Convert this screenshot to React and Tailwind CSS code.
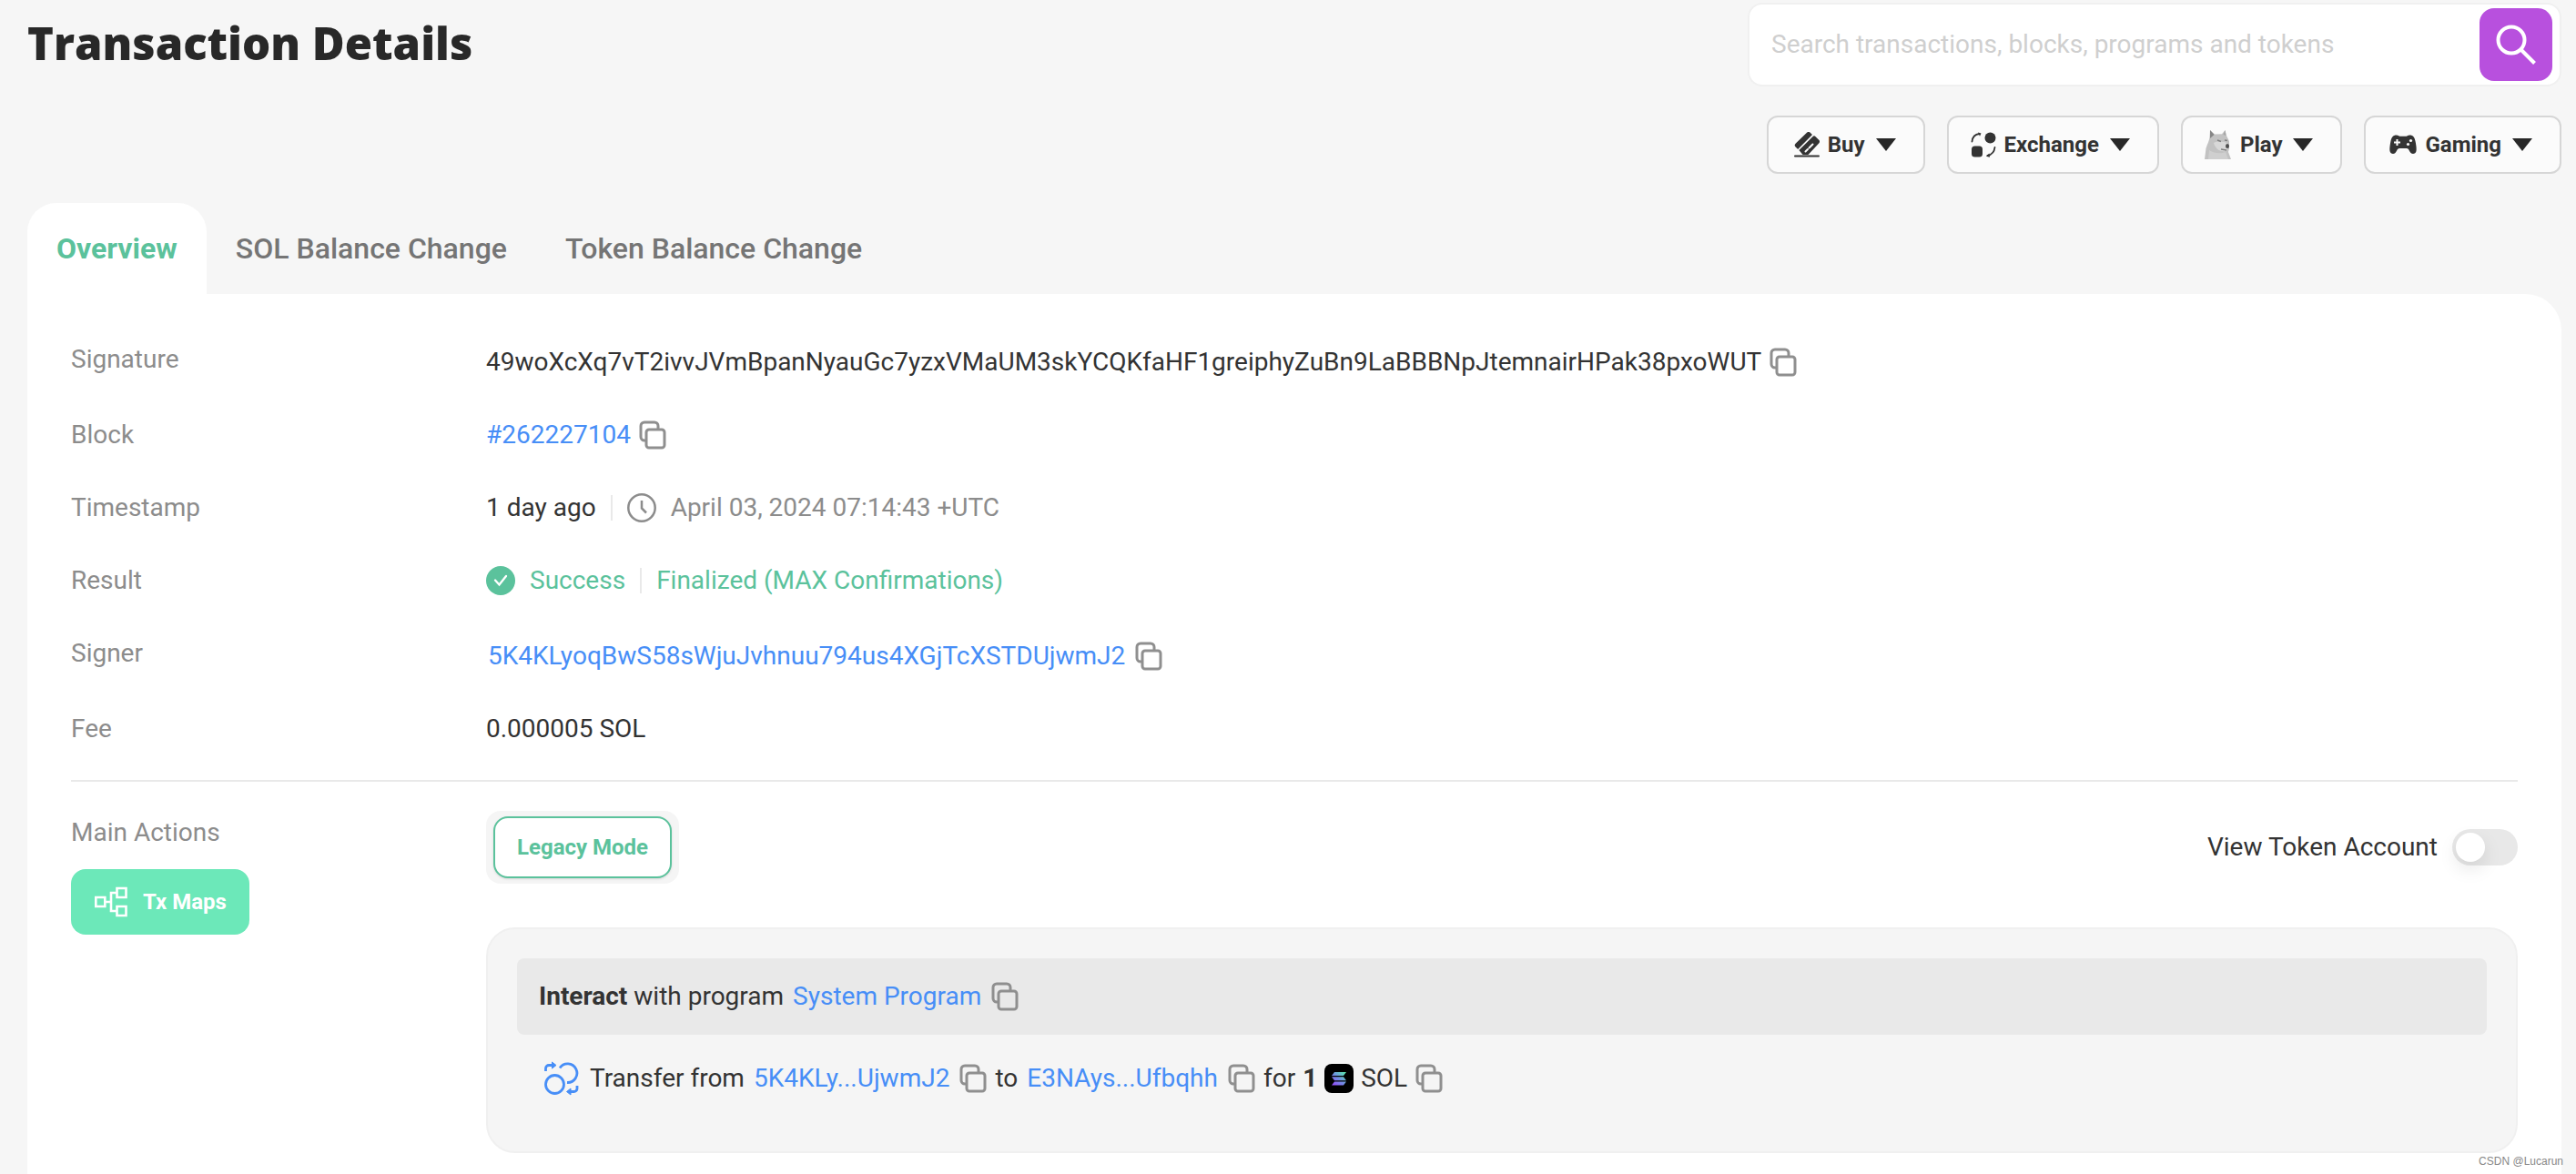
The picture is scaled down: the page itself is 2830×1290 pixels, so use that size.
import React from 'react';

const COPY_PATHS = [
  'M10 22H7a4 4 0 0 1-4-4V6a4 4 0 0 1 4-4h11a4 4 0 0 1 4 4v3',
  'M12 10h14a3 3 0 0 1 3 3v14a3 3 0 0 1-3 3H12a3 3 0 0 1-3-3V13a3 3 0 0 1 3-3z',
];

const CopyButton = () => (
  <button type="button" aria-label="Copy" className="shrink-0">
    <svg viewBox="0 0 32 32" className="h-8 w-8" fill="none" stroke="#8f8f8f" strokeWidth="3">
      {COPY_PATHS.map((d) => (
        <path key={d} d={d} />
      ))}
    </svg>
  </button>
);

const BuyIcon = () => (
  <svg viewBox="0 0 28 28" className="ml-1 h-7 w-7" fill="#333">
    <path d="M14 .8a2.600 2.600 0 0 1 3.700 0l2.300 2.300L4.200 18.900l-2.600-2.500a2.600 2.600 0 0 1 0-3.700z" />
    <path d="M5.400 20 20.600 5a2 2 0 0 1 2.800 0l3.800 3.800a2.600 2.600 0 0 1 0 3.700L15.500 25H9.600z" />
    <path d="M1 26.500h26" stroke="#333" strokeWidth="2" strokeLinecap="round" />
    <path d="m12.500 21.500 2.500-2.500m1.500-1.500 4-4" stroke="#fbfbfb" strokeWidth="2" strokeLinecap="round" />
  </svg>
);

const ExchangeIcon = () => (
  <svg viewBox="0 0 28 28" className="h-7 w-7" fill="#333">
    <circle cx="21.500" cy="6.500" r="6" />
    <rect x="1" y="15.500" width="12" height="12" rx="3.500" />
    <path d="M1.500 10.500C2 6 5 2.500 9.500 2M26.500 17c-.5 4.500-3.500 8-8 9" fill="none" stroke="#333" strokeWidth="1.800" strokeLinecap="round" />
    <path d="M8 .5 11.500 1.500 10 4.800zM20.500 23.500 17 26.800l4 1z" />
  </svg>
);

const PlayIcon = () => (
  <svg viewBox="0 0 30 32" className="h-8 w-[30px]">
    <path d="M0 32 1.500 20C3 15 5 12 5.500 8L6 0l5 4.500 8-.3L22.500 0 24 6l3 6v8l-1 4 3 8z" fill="#c2c2c2" />
    <path d="M6 0l4.500 5L6 9z" fill="#858585" />
    <path d="M22.500 0 23.500 6l-3-1z" fill="#a5a5a5" />
    <path d="M10 14c4-2 12-2 15 1l1 4-3 4c-6 1-11-2-13-9z" fill="#d8d8d8" />
    <path d="M5 22c6 4 13 4 18 2l3 8H4z" fill="#cfcfcf" />
    <path d="m14 11 4 1.500M22 11l3 .5M18 21l6 1" stroke="#808080" strokeWidth="1.500" />
    <ellipse cx="25" cy="17.500" rx="2" ry="2.500" fill="#4d4d4d" />
  </svg>
);

const GamingIcon = () => (
  <svg viewBox="0 0 30 22" className="ml-[2px] h-[22px] w-[30px]">
    <path
      d="M8 .5c1.500 0 2.300 1.200 3.500 1.200h7C19.700 1.700 20.500.5 22 .5c4.500 0 5.800 2.500 6.700 7.500.7 3.800 1.300 7.500.8 10-.5 3-4 4-6 2-1.600-1.800-2.300-5-4.500-5h-8c-2.200 0-2.900 3.200-4.500 5-2 2-5.500 1-6-2-.5-2.500.1-6.200.8-10C2.200 3 3.500.5 8 .5z"
      fill="#333"
    />
    <path d="M8.500 5v7M5 8.500h7" stroke="#fbfbfb" strokeWidth="2" />
    <circle cx="23.500" cy="6.500" r="1.600" fill="#fbfbfb" />
    <circle cx="20.500" cy="10.500" r="1.600" fill="#fbfbfb" />
  </svg>
);

const ClockIcon = () => (
  <svg viewBox="0 0 32 32" className="h-8 w-8" fill="none" stroke="#8c8c8c" strokeWidth="2.500">
    <circle cx="16" cy="16" r="14.700" />
    <path d="M16 8v8.500l5 5" />
  </svg>
);

const SuccessIcon = () => (
  <svg viewBox="0 0 32 32" className="h-8 w-8">
    <circle cx="16" cy="16" r="16" fill="#5bc29c" />
    <path d="m10 15.500 4.500 5L22 11" fill="none" stroke="#fff" strokeWidth="2.300" strokeLinecap="round" />
  </svg>
);

const MapsIcon = () => (
  <svg viewBox="0 0 38 34" className="h-[34px] w-[38px]" fill="none" stroke="#fff" strokeWidth="2.600">
    <path d="M2.300 12h10v10h-10zM25.500 2h10v10h-10zM25.500 22h10v10h-10zM12.300 17H19M25.500 7H19v20h6.500" />
  </svg>
);

const TransferIcon = () => (
  <svg viewBox="0 0 38 38" className="h-[38px] w-[38px]" fill="none" stroke="#478ef7" strokeWidth="2.800">
    <circle cx="11.500" cy="25.500" r="10" />
    <path d="M17 7.500a10.300 10.300 0 1 1 8 16" />
    <path d="M1.500 11V8a3.500 3.500 0 0 1 3.500-3.500h6M36 27v3a3.500 3.500 0 0 1-3.500 3.500h-6" />
    <path d="M8.500 1v7l4.500-3.500zM29 30v7l-4.500-3.500z" fill="#478ef7" strokeWidth="1" />
  </svg>
);

const SolanaIcon = () => (
  <svg viewBox="0 0 32 32" className="h-8 w-8">
    <defs>
      <linearGradient id="sol" x1="0" y1="1" x2="1" y2="0">
        <stop offset="0" stopColor="#9945ff" />
        <stop offset="0.500" stopColor="#6f8fe0" />
        <stop offset="1" stopColor="#5af0a8" />
      </linearGradient>
    </defs>
    <rect width="32" height="32" rx="8" fill="#000" />
    <path d="M11 9h13l-3 4H8zM8 14.200h13l3 4H11zM11 19.500h13l-3 4H8z" fill="url(#sol)" />
  </svg>
);

const MENUS = [
  { label: 'Buy', Icon: BuyIcon },
  { label: 'Exchange', Icon: ExchangeIcon },
  { label: 'Play', Icon: PlayIcon },
  { label: 'Gaming', Icon: GamingIcon },
];

const TABS = ['Overview', 'SOL Balance Change', 'Token Balance Change'];

const Divider = () => <span className="h-7 w-[2px] bg-[#e9e9e9]" />;

const Row = ({ label, children }) => (
  <div className="flex h-10 items-center">
    <dt className="w-[456px] shrink-0 text-[#8c8c8c]">{label}</dt>
    <dd className="flex items-center">{children}</dd>
  </div>
);

// Hash values sit a little below their label
const HashRow = ({ label, children }) => (
  <div className="flex h-[43px]">
    <dt className="w-[456px] shrink-0 text-[#8c8c8c]">{label}</dt>
    <dd className="flex items-center self-end">{children}</dd>
  </div>
);

const Header = () => (
  <header className="flex items-start justify-between pl-[30px]">
    <h1 className="pt-[11px] font-['Open_Sans',sans-serif] text-[49px] leading-[72px] font-extrabold text-[#282828]">
      Transaction Details
    </h1>
    <div className="flex w-[910px] flex-col gap-8 pt-[3px] pr-4">
      <form className="flex h-[92px] items-center rounded-2xl border-2 border-[#f0f0f0] bg-white py-1 pr-2 pl-6">
        <input
          type="text"
          aria-label="Search"
          placeholder="Search transactions, blocks, programs and tokens"
          className="min-w-0 flex-1 outline-none placeholder:text-[#cfcfcf]"
        />
        <button
          type="button"
          aria-label="Search"
          className="flex h-20 w-20 items-center justify-center rounded-2xl bg-[#b850de]"
        >
          <svg viewBox="0 0 44 44" className="h-11 w-11" fill="none" stroke="#fff" strokeWidth="4">
            <circle cx="17" cy="17" r="14.500" />
            <path d="m27.500 27.500 15 15" />
          </svg>
        </button>
      </form>
      <nav className="flex justify-end gap-6">
        {MENUS.map(({ label, Icon }) => (
          <button
            key={label}
            type="button"
            className="flex h-16 items-center rounded-xl border-2 border-[#d6d6d6] bg-[#fbfbfb] pr-[30px] pl-6 text-2xl font-bold text-[#333]"
          >
            <Icon />
            <span className="mr-3 ml-[9px]">{label}</span>
            <svg viewBox="0 0 22 14" className="h-[14px] w-[22px]" fill="#282828">
              <path d="M0 0h22L11 14z" />
            </svg>
          </button>
        ))}
      </nav>
    </div>
  </header>
);

const MainActions = () => (
  <section className="flex pt-8">
    <div className="w-[456px] shrink-0 text-[#8c8c8c]">
      <div className="pt-1 leading-10">Main Actions</div>
      <button
        type="button"
        className="mt-5 flex h-[72px] items-center gap-4 rounded-2xl bg-[#6ce8b9] px-[25px] text-2xl font-bold text-white"
      >
        <MapsIcon />
        Tx Maps
      </button>
    </div>
    <div className="min-w-0 flex-1">
      <div className="flex items-center justify-between">
        <div className="rounded-2xl bg-[#f5f5f5] px-2 py-[6px]">
          <button
            type="button"
            className="h-[68px] rounded-2xl border-2 border-[#5bc29c] bg-white px-6 text-2xl font-bold text-[#5bc29c] shadow-sm"
          >
            Legacy Mode
          </button>
        </div>
        <label className="flex items-center gap-4">
          View Token Account
          <input
            type="checkbox"
            role="switch"
            className="h-10 w-[72px] appearance-none rounded-full bg-[#e8e8e8] p-1 before:block before:h-8 before:w-8 before:rounded-full before:bg-white before:shadow-[0_8px_20px_rgba(0,0,0,0.1)]"
          />
        </label>
      </div>
      <div className="mt-12 h-[248px] rounded-[32px] border-2 border-[#f0f0f0] bg-[#f5f5f5] p-8">
        <div className="flex h-[84px] items-center rounded-lg bg-[#e9e9e9] px-6">
          <strong className="mr-[7px]">Interact</strong>
          with program
          <a href="#" className="mx-[10px] text-[#478ef7]">System Program</a>
          <CopyButton />
        </div>
        <div className="flex h-24 items-center pl-[30px]">
          <TransferIcon />
          <span className="ml-3">Transfer from</span>
          <a href="#" className="mx-[10px] text-[#478ef7]">5K4KLy...UjwmJ2</a>
          <CopyButton />
          <span className="ml-2">to</span>
          <a href="#" className="mx-[10px] text-[#478ef7]">E3NAys...Ufbqhh</a>
          <CopyButton />
          <span className="ml-2">for</span>
          <strong className="mx-2">1</strong>
          <SolanaIcon />
          <span className="mx-2">SOL</span>
          <CopyButton />
        </div>
      </div>
    </div>
  </section>
);

const App = () => (
  <div className="flex min-h-screen flex-col bg-[#f6f6f6] font-['Roboto',sans-serif] text-[28px] leading-10 text-[#333]">
    <Header />
    <main className="flex flex-1 flex-col pt-8 pr-4 pl-[30px]">
      <div role="tablist" className="flex text-[32px] leading-10 font-medium">
        {TABS.map((tab, i) => (
          <button
            key={tab}
            type="button"
            role="tab"
            aria-selected={i === 0}
            className={
              i === 0
                ? 'h-[100px] rounded-t-[32px] bg-white px-8 font-bold text-[#5bc29c]'
                : 'h-[100px] px-8 text-[#757575]'
            }
          >
            {tab}
          </button>
        ))}
      </div>
      <div className="flex-1 rounded-tr-[40px] bg-white px-12 pt-[52px]">
        <dl className="flex flex-col gap-10 border-b-2 border-[#e9e9e9] pb-9">
          <HashRow label="Signature">
            <span className="mr-2">
              49woXcXq7vT2ivvJVmBpanNyauGc7yzxVMaUM3skYCQKfaHF1greiphyZuBn9LaBBBNpJtemnairHPak38pxoWUT
            </span>
            <CopyButton />
          </HashRow>
          <Row label="Block">
            <a href="#" className="mr-2 text-[#478ef7]">#262227104</a>
            <CopyButton />
          </Row>
          <Row label="Timestamp">
            <span className="mr-4">1 day ago</span>
            <Divider />
            <span className="ml-4 flex items-center gap-4 text-[#8c8c8c]">
              <ClockIcon />
              April 03, 2024 07:14:43 +UTC
            </span>
          </Row>
          <Row label="Result">
            <SuccessIcon />
            <span className="mx-4 text-[#5bc29c]">Success</span>
            <Divider />
            <span className="ml-4 text-[#5bc29c]">Finalized (MAX Confirmations)</span>
          </Row>
          <HashRow label="Signer">
            <a href="#" className="mr-[10px] ml-[2px] text-[#478ef7]">5K4KLyoqBwS58sWjuJvhnuu794us4XGjTcXSTDUjwmJ2</a>
            <CopyButton />
          </HashRow>
          <Row label="Fee">0.000005 SOL</Row>
        </dl>
        <MainActions />
      </div>
    </main>
    <div className="absolute right-[14px] bottom-[6px] font-['Liberation_Sans',sans-serif] text-xs leading-4 text-[#888]">
      CSDN @Lucarun
    </div>
  </div>
);

export default App;
